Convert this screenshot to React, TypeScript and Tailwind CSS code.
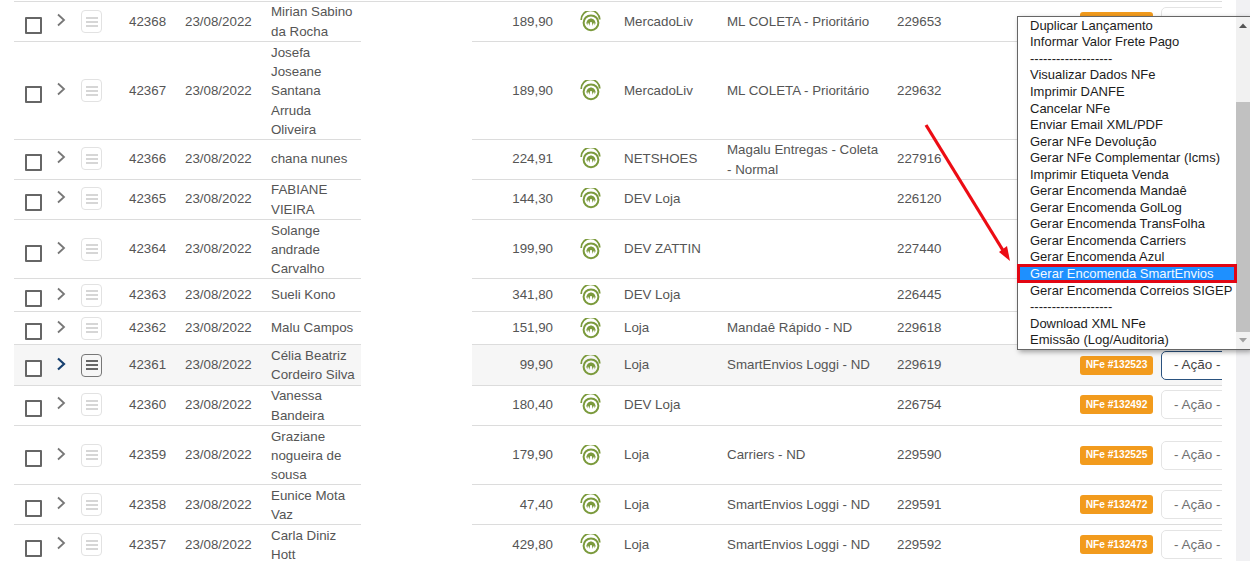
import React from "react";

type Row = {
  h: string; id: string; name: string; value: string; canal: string; ship: string; num: string; nfe?: string; action?: boolean; active?: boolean; first?: boolean; up?: boolean; cbUp?: boolean; nameDown?: string; shipDown?: string;
};

const rows: Row[] = [
  { h: "h-[40px]", id: "42368", name: "Mirian Sabino da Rocha", value: "189,90", canal: "MercadoLiv", ship: "ML COLETA - Prioritário", num: "229653", action: true, first: true },
  { h: "h-[98px]", id: "42367", name: "Josefa Joseane Santana Arruda Oliveira", value: "189,90", canal: "MercadoLiv", ship: "ML COLETA - Prioritário", num: "229632", nameDown: "pt-[1px]" },
  { h: "h-[40px]", id: "42366", name: "chana nunes", value: "224,91", canal: "NETSHOES", ship: "Magalu Entregas - Coleta - Normal", num: "227916", up: true, shipDown: "pt-[2px]" },
  { h: "h-[40px]", id: "42365", name: "FABIANE VIEIRA", value: "144,30", canal: "DEV Loja", ship: "", num: "226120", up: true, nameDown: "pt-[2px]" },
  { h: "h-[59px]", id: "42364", name: "Solange andrade Carvalho", value: "199,90", canal: "DEV ZATTIN", ship: "", num: "227440", nameDown: "pt-[1px]" },
  { h: "h-[33px]", id: "42363", name: "Sueli Kono", value: "341,80", canal: "DEV Loja", ship: "", num: "226445", cbUp: true },
  { h: "h-[33px]", id: "42362", name: "Malu Campos", value: "151,90", canal: "Loja", ship: "Mandaê Rápido - ND", num: "229618", cbUp: true },
  { h: "h-[41px]", id: "42361", name: "Célia Beatriz Cordeiro Silva", value: "99,90", canal: "Loja", ship: "SmartEnvios Loggi - ND", num: "229619", nfe: "NFe #132523", action: true, active: true, cbUp: true },
  { h: "h-[40px]", id: "42360", name: "Vanessa Bandeira", value: "180,40", canal: "DEV Loja", ship: "", num: "226754", nfe: "NFe #132492", action: true, up: true, nameDown: "pt-[2px]" },
  { h: "h-[59px]", id: "42359", name: "Graziane nogueira de sousa", value: "179,90", canal: "Loja", ship: "Carriers - ND", num: "229590", nfe: "NFe #132525", action: true, cbUp: true, nameDown: "pt-[1px]" },
  { h: "h-[40px]", id: "42358", name: "Eunice Mota Vaz", value: "47,40", canal: "Loja", ship: "SmartEnvios Loggi - ND", num: "229591", nfe: "NFe #132472", action: true, nameDown: "pt-[1px]" },
  { h: "h-[40px]", id: "42357", name: "Carla Diniz Hott", value: "429,80", canal: "Loja", ship: "SmartEnvios Loggi - ND", num: "229592", nfe: "NFe #132473", action: true, nameDown: "pt-[1px]" },
];

const menu = [
  "Duplicar Lançamento", "Informar Valor Frete Pago", "-------------------", "Visualizar Dados NFe", "Imprimir DANFE", "Cancelar NFe",
  "Enviar Email XML/PDF", "Gerar NFe Devolução", "Gerar NFe Complementar (Icms)", "Imprimir Etiqueta Venda", "Gerar Encomenda Mandaê",
  "Gerar Encomenda GolLog", "Gerar Encomenda TransFolha", "Gerar Encomenda Carriers", "Gerar Encomenda Azul", "Gerar Encomenda SmartEnvios",
  "Gerar Encomenda Correios SIGEP", "-------------------", "Download XML NFe", "Emissão (Log/Auditoria)",
];

function Logo() {
  return (
    <svg width="21" height="21" viewBox="0 0 21 21" fill="none" stroke="#7b9a3c">
      <path d="M1.2 9 A9.3 9.3 0 0 1 19.8 8.6" strokeWidth="1.7" />
      <circle cx="11" cy="11.8" r="7.4" strokeWidth="2" />
      <path d="M6.2 13.4 C6.2 9.4 8.8 7.4 11 7.4 C13.2 7.4 15.8 9.4 15.8 13.4 L14.8 11.6 L14.4 14.2 L13.4 11.4 L12.8 15 L11.7 11 L10.3 11 L9.2 15 L8.6 11.4 L7.6 14.2 L7.2 11.6 Z" fill="#7b9a3c" stroke="none" />
    </svg>
  );
}

function DocIcon({ active }: { active?: boolean }) {
  return (
    <div className={`flex h-[23px] w-[21px] flex-col items-center justify-center gap-[2px] rounded-[4px] border ${active ? "border-[#777]" : "border-[#e2e2e2]"}`}>
      {[0, 1, 2].map((i) => (
        <div key={i} className={`h-[2px] w-[12px] ${active ? "bg-[#666]" : "bg-[#d6d6d6]"}`} />
      ))}
    </div>
  );
}

function Chevron({ active }: { active?: boolean }) {
  return (
    <svg width="10" height="14" viewBox="0 0 10 14" fill="none" stroke={active ? "#17406f" : "#777"} strokeWidth={active ? 2.2 : 1.8}>
      <path d="M2 1.5 L8 7 L2 12.5" />
    </svg>
  );
}

function TableRow({ r }: { r: Row }) {
  const line = "border-t border-[#dcdcdc]";
  const bg = r.active ? "bg-[#f6f6f6]" : "bg-white";
  const nudge = r.up ? "pb-[2px]" : "";
  return (
    <div className={`flex ${r.h} box-content`}>
      <div className={`flex w-[347px] shrink-0 items-center ${line} ${bg} ${nudge}`}>
        <div className={`w-[42px] shrink-0 pl-[11px] ${r.cbUp ? "pt-[6px]" : "pt-[8px]"}`}>
          <div className="h-[17px] w-[17px] rounded-[1px] border-2 border-[#666] bg-white" />
        </div>
        <div className="flex w-[25px] shrink-0 pb-[3px]"><Chevron active={r.active} /></div>
        <div className="w-[48px] shrink-0"><DocIcon active={r.active} /></div>
        <div className="w-[56px] shrink-0">{r.id}</div>
        <div className="w-[86px] shrink-0">23/08/2022</div>
        <div className={`w-[85px] shrink-0 ${r.nameDown ?? ""}`}>{r.name}</div>
      </div>
      <div className={`w-[111px] shrink-0 ${r.first ? line : ""}`} />
      <div className={`flex w-[750px] shrink-0 items-center ${line} ${bg} ${nudge}`}>
        <div className="w-[81px] shrink-0 text-right">{r.value}</div>
        <div className="w-[71px] shrink-0 pl-[27px]"><Logo /></div>
        <div className="w-[103px] shrink-0 whitespace-nowrap">{r.canal}</div>
        <div className={`w-[170px] shrink-0 pr-[14px] ${r.shipDown ?? ""}`}>{r.ship}</div>
        <div className="w-[183px] shrink-0">{r.num}</div>
        <div className="w-[81px] shrink-0">
          {(r.nfe || r.action) && (
            <div className="flex h-[19px] w-[73px] items-center justify-center rounded-[3px] bg-[#f29b1d] text-[10.2px] font-semibold text-white">{r.nfe}</div>
          )}
        </div>
        <div className="w-[61px] shrink-0 overflow-hidden">
          {r.action && (
            <div className={`flex h-[29px] w-[80px] items-center whitespace-nowrap rounded-[5px] border bg-white pl-[12px] text-[13.5px] text-[#6f6f6f] ${r.active ? "border-[#2a527f] text-[#444]" : "border-[#e4e4e4]"}`}>
              - Ação -
            </div>
          )}
        </div>
      </div>
    </div>
  );
}

function Popup() {
  return (
    <div className="absolute left-[1017px] top-[16px] flex h-[334px] w-[233px] border border-r-0 border-[#666] bg-white shadow-[2px_2px_5px_rgba(0,0,0,0.35)]">
      <div className="w-[218px] shrink-0 whitespace-nowrap text-[13px] text-[#1c1c1c]">
        {menu.map((m, i) => {
          const sel = m.includes("SmartEnvios");
          return (
            <div key={i} className={`relative flex h-[16.55px] items-center pl-[12px] leading-none ${sel ? "bg-[#1e90ff] text-[#f2f8ff]" : ""}`}>
              {m}
              {sel && <div className="absolute -inset-x-[1px] -inset-y-[1.5px] border-[3px] border-[#e20613]" />}
            </div>
          );
        })}
      </div>
      <div className="flex w-[14px] shrink-0 flex-col items-center bg-[#f1f1f1]">
        <svg width="14" height="17" viewBox="0 0 14 17" className="shrink-0"><path d="M3 11 L7 6.5 L11 11 Z" fill="#555" /></svg>
        <div className="mt-[68px] h-[230px] w-full bg-[#c1c1c1]" />
        <svg width="14" height="17" viewBox="0 0 14 17" className="shrink-0"><path d="M3 6 L7 10.5 L11 6 Z" fill="#a0a0a0" /></svg>
      </div>
    </div>
  );
}

export default function App() {
  return (
    <div className="relative flex h-[561px] w-[1250px] overflow-hidden bg-white font-['Liberation_Sans',sans-serif] text-[13.33px] leading-[19.2px] text-[#555]">
      <div className="w-[1236px] shrink-0 pl-[14px] pt-[1px]">
        {rows.map((r) => <TableRow key={r.id} r={r} />)}
      </div>
      <div className="w-[14px] shrink-0 bg-[#f1f1f3]" />
      <Popup />
      <svg className="pointer-events-none absolute left-0 top-0" width="1250" height="561" fill="none">
        <path d="M926 125 L1004 252" stroke="#ec0c14" strokeWidth="3.2" />
        <path d="M1010 261 L999 252 L1007 246 Z" fill="#ec0c14" />
      </svg>
    </div>
  );
}
